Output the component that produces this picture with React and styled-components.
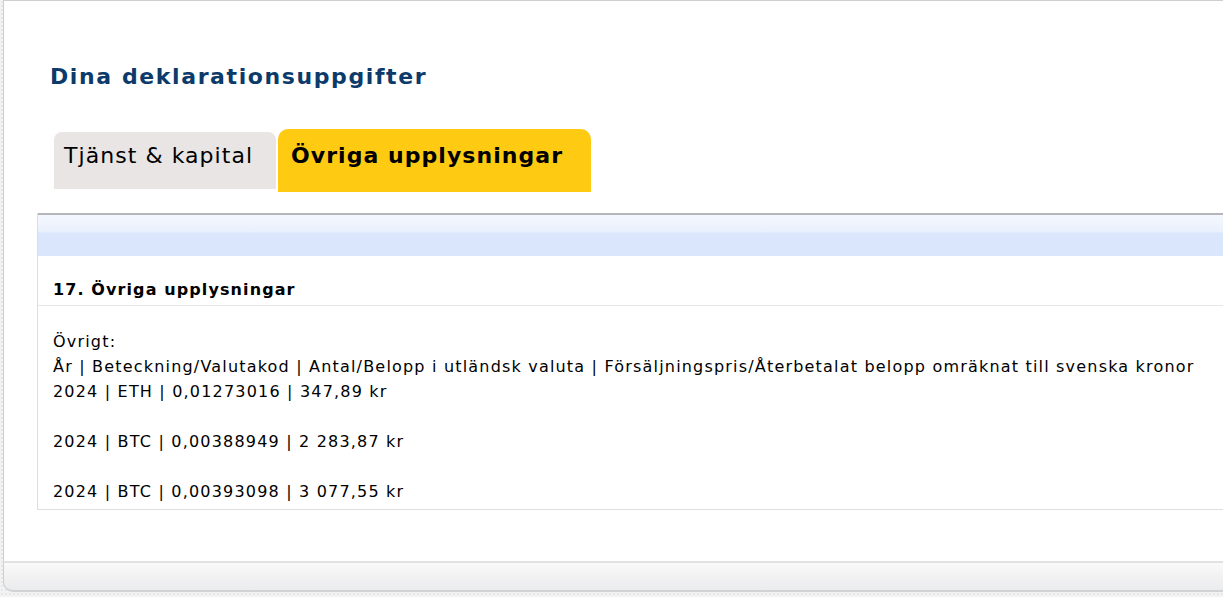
import React from 'react';
import styled, { createGlobalStyle } from 'styled-components';

const GlobalStyle = createGlobalStyle`
  html, body {
    margin: 0;
    padding: 0;
    overflow: hidden;
  }
  body {
    background-color: #f3f3f3;
    background-image: radial-gradient(#e6e6e6 1px, transparent 1px);
    background-size: 4px 4px;
    font-family: "DejaVu Sans", Verdana, sans-serif;
    color: #000;
  }
`;

// Sidans ram
const Page = styled.div`
  margin-left: 3px;
  width: calc(100vw + 20px);
`;

const Panel = styled.main`
  background: #fff;
  border-top: 1px solid #cfcfcf;
  border-left: 1px solid #cfcfcf;
  height: 561px;
  box-sizing: border-box;
  padding-top: 62px;
`;

const Heading = styled.h1`
  margin: 0 0 0 46px;
  font-size: 22px;
  line-height: 28px;
  font-weight: bold;
  letter-spacing: 1.6px;
  color: #0b3a6b;
`;

// Flikar
const TabRow = styled.nav`
  display: flex;
  align-items: center;
  gap: 2px;
  margin: 38px 0 0 50px;
`;

const Tab = styled.div`
  box-sizing: border-box;
  width: ${(p) => (p.$active ? '313px' : '222px')};
  height: ${(p) => (p.$active ? '63px' : '57px')};
  padding: ${(p) => (p.$active ? '13px 0 0 13px' : '10px 0 0 10px')};
  background: ${(p) => (p.$active ? '#fecb12' : '#e9e5e4')};
  border-radius: ${(p) => (p.$active ? '10px 10px 0 0' : '8px 8px 0 0')};
  font-size: 22px;
  line-height: 28px;
  letter-spacing: 1.05px;
  font-weight: ${(p) => (p.$active ? 'bold' : 'normal')};
  white-space: nowrap;
`;

// Innehållsrutan
const Box = styled.section`
  margin: 21px 0 0 33px;
  border-left: 1px solid #dedede;
  border-bottom: 1px solid #dedede;
`;

const BoxHeader = styled.div`
  height: 41px;
  border-top: 2px solid #b4b6ba;
  background: linear-gradient(to bottom, #f4f7fe 0%, #eaf1fd 40%, #d9e6fc 45%, #d9e6fc 100%);
`;

const SectionTitle = styled.h2`
  margin: 0;
  padding: 24px 0 5px 15px;
  font-size: 16px;
  line-height: 20px;
  font-weight: bold;
  letter-spacing: 1.1px;
  border-bottom: 1px solid #e6e6e6;
`;

const Body = styled.div`
  padding: 23px 0 5px 15px;
  font-size: 16px;
  line-height: 25px;
  letter-spacing: 1.19px;
  white-space: pre-line;
`;

const Footer = styled.footer`
  height: 27px;
  border-top: 2px solid #e2e2e2;
  border-bottom: 2px solid #d2d2d2;
  border-left: 1px solid #cfcfcf;
  border-bottom-left-radius: 10px;
  background: linear-gradient(to bottom, #fbfafb 0%, #f1f1f2 50%, #ebecee 100%);
`;

const rows = [
  'Övrigt:',
  'År | Beteckning/Valutakod | Antal/Belopp i utländsk valuta | Försäljningspris/Återbetalat belopp omräknat till svenska kronor',
  '2024 | ETH | 0,01273016 | 347,89 kr',
  '',
  '2024 | BTC | 0,00388949 | 2 283,87 kr',
  '',
  '2024 | BTC | 0,00393098 | 3 077,55 kr',
];

const App = () => {
  return (
    <>
      <GlobalStyle />
      <Page>
        <Panel>
          <Heading>Dina deklarationsuppgifter</Heading>
          <TabRow>
            <Tab>Tjänst &amp; kapital</Tab>
            <Tab $active>Övriga upplysningar</Tab>
          </TabRow>
          <Box>
            <BoxHeader />
            <SectionTitle>17. Övriga upplysningar</SectionTitle>
            <Body>{rows.join('\n')}</Body>
          </Box>
        </Panel>
        <Footer />
      </Page>
    </>
  );
};

export default App;
